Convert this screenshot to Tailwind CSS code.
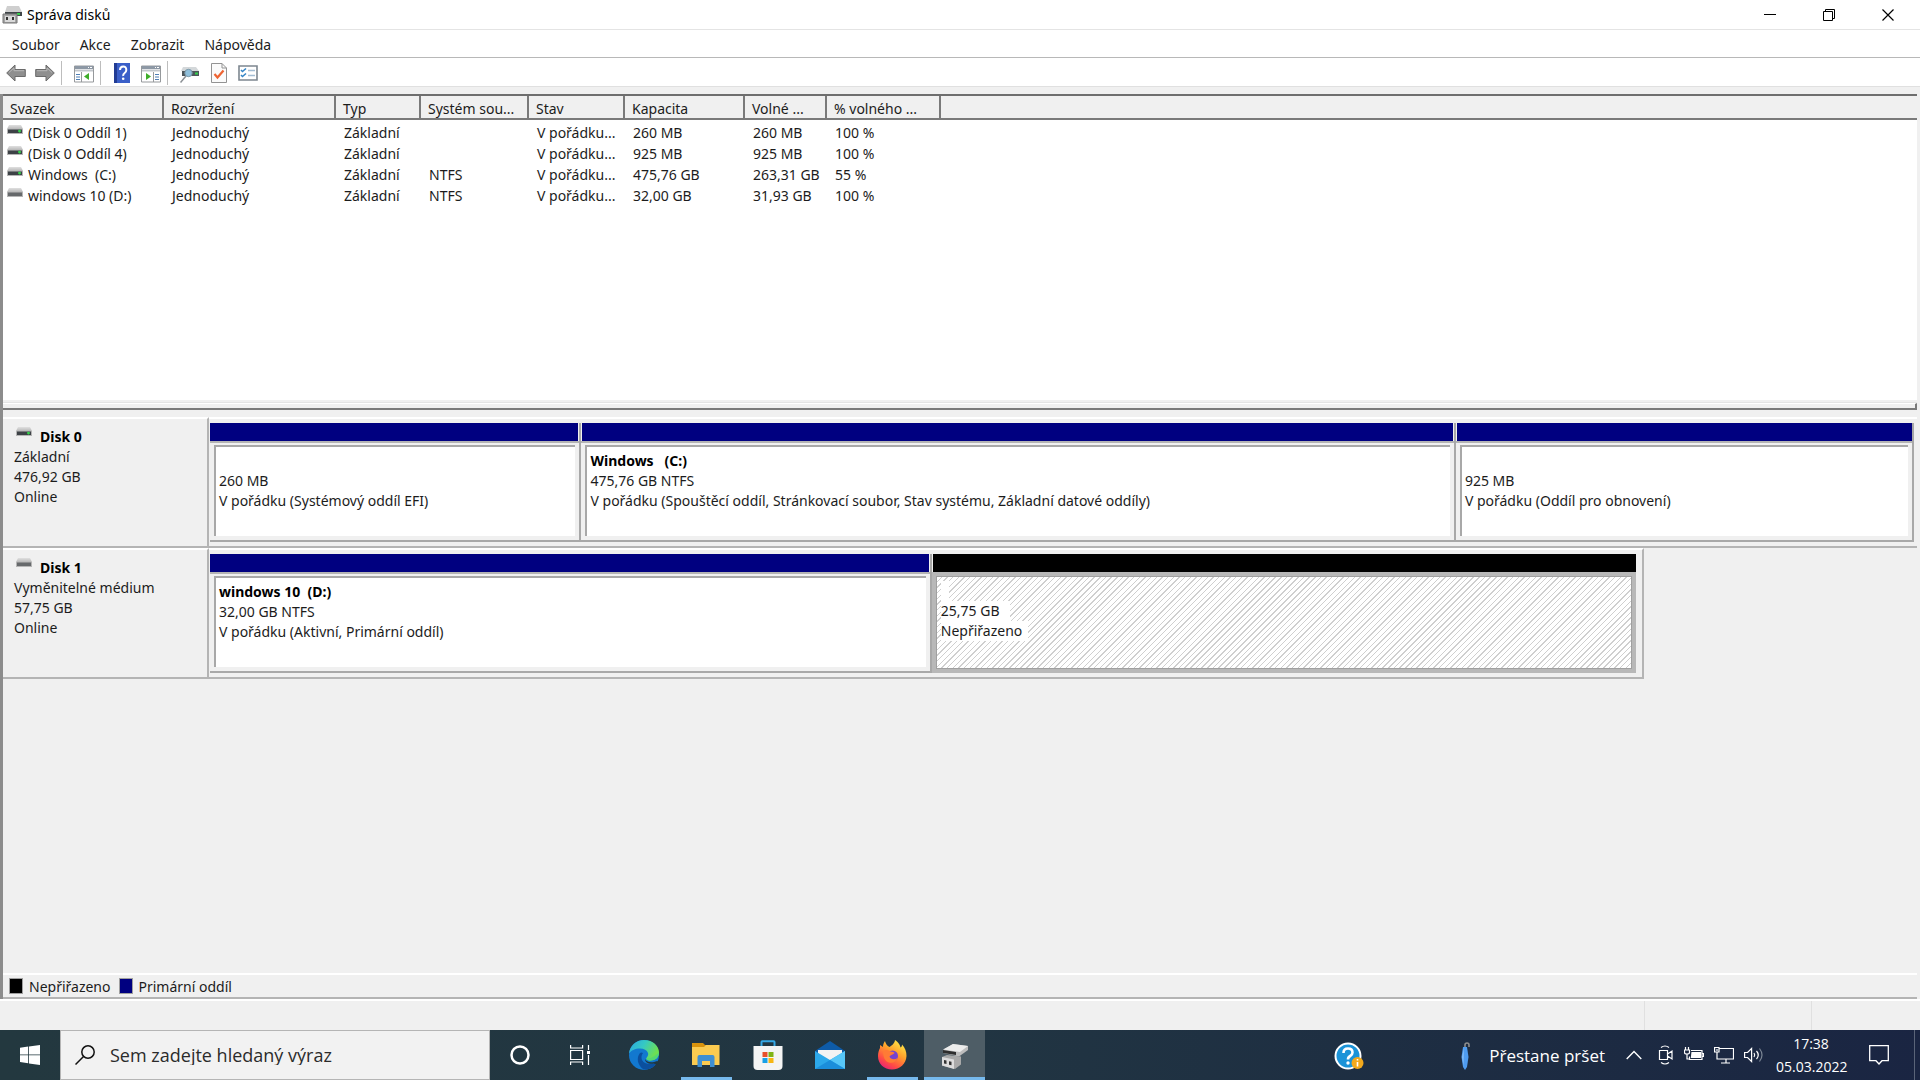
<!DOCTYPE html>
<html lang="cs">
  <head>
    <meta charset="UTF-8" />
    <meta name="viewport" content="width=device-width, initial-scale=1.0" />
    <title>Správa disků</title>
    <script src="https://cdn.jsdelivr.net/npm/@tailwindcss/browser@4"></script>
  </head>
  <body
    class="flex flex-col h-screen overflow-hidden bg-[#f0f0f0] font-['Noto_Sans','Open_Sans',sans-serif] text-[14px] leading-5 text-[#1c1c1c]"
  >
    <!-- Shared icons -->
    <svg class="absolute w-0 h-0">
      <linearGradient id="lid" x1="0" y1="0" x2="0" y2="1">
        <stop offset="0" stop-color="#e0e0e0" />
        <stop offset="1" stop-color="#b8b8b8" />
      </linearGradient>
      <symbol id="drive" viewBox="0 0 16 10">
        <path d="M2 0h12l2 4H0z" fill="url(#lid)" />
        <path d="M0 4h16v5H0z" fill="#b5b5b5" />
        <path d="M1 4.500h14v3.500H1z" fill="#3d4246" />
        <path d="M11 6h3M12.500 4.700v2.800" stroke="#35d04c" stroke-width="1.300" />
      </symbol>
      <symbol id="removable" viewBox="0 0 16 10">
        <path d="M2 0h12l2 4H0z" fill="url(#lid)" />
        <path d="M0 4h16v5H0z" fill="#b5b5b5" />
        <path d="M1 4.500h14v3.500H1z" fill="#66696b" />
      </symbol>
    </svg>

    <!-- Title bar -->
    <header class="flex items-center h-[30px] shrink-0 bg-white border-b border-[#e4e4e4] pl-0.5 pr-[3px]">
      <svg class="w-5 h-5" viewBox="0 0 20 20">
        <path d="M5 1h12l3 6H3z" fill="#cfcfcf" />
        <path d="M3 7h17v4H3z" fill="#3f4548" />
        <path d="M15 9h3" stroke="#35d04c" stroke-width="2" />
        <path d="M1 9h14v9H1z" fill="#a4a4a4" stroke="#777" />
        <path d="M3 11h10v6H3z" fill="#d9d9d9" />
        <path d="M4 12h2v3H4zM10 12h2v3h-2z" fill="#333" />
      </svg>
      <h1 class="ml-[5px] text-black">Správa disků</h1>
      <div class="ml-auto flex">
        <button class="w-[59px] h-7 flex items-center justify-center" aria-label="Minimalizovat">
          <svg class="w-3 h-3" viewBox="0 0 12 12"><path d="M0 5.500h12" stroke="#000" /></svg>
        </button>
        <button class="w-[59px] h-7 flex items-center justify-center" aria-label="Obnovit">
          <svg class="w-3 h-3" viewBox="0 0 12 12" fill="none" stroke="#000">
            <path d="M.5 2.500h9v9h-9zM2.500 2.500v-2h9v9h-2" />
          </svg>
        </button>
        <button class="w-[59px] h-7 flex items-center justify-center" aria-label="Zavřít">
          <svg class="w-3 h-3" viewBox="0 0 12 12"><path d="M.5.5l11 11M11.500.5l-11 11" stroke="#000" stroke-width="1.200" /></svg>
        </button>
      </div>
    </header>

    <!-- Menu -->
    <nav class="flex items-center h-7 shrink-0 bg-white border-b border-[#b8b8b8] pt-0.5 pl-3 gap-5">
      <button>Soubor</button>
      <button>Akce</button>
      <button>Zobrazit</button>
      <button>Nápověda</button>
    </nav>

    <!-- Toolbar -->
    <div class="flex items-center h-[29px] shrink-0 bg-white border-b border-[#e0e0e0] pl-1.5 pt-0.5">
      <button aria-label="Zpět">
        <svg class="w-5 h-[18px]" viewBox="0 0 20 18">
          <path d="M.7 9L9 1v4.500h10.300v7H9V17z" fill="#8f8f8f" stroke="#6b6b6b" stroke-linejoin="round" />
          <path d="M3 8.500L8 4v2.700h10" fill="none" stroke="#b8b8b8" />
        </svg>
      </button>
      <button class="ml-[9px]" aria-label="Vpřed">
        <svg class="w-5 h-[18px]" viewBox="0 0 20 18">
          <path d="M19.300 9L11 1v4.500H.7v7H11V17z" fill="#8f8f8f" stroke="#6b6b6b" stroke-linejoin="round" />
          <path d="M17 8.500L12 4v2.700H2" fill="none" stroke="#b8b8b8" />
        </svg>
      </button>
      <span class="w-px h-6 ml-1.5 bg-[#bdbdbd]"></span>
      <button class="ml-3 mt-0.5" aria-label="Zobrazit strom konzoly">
        <svg class="w-5 h-[18px]" viewBox="0 0 20 18">
          <path d="M.5 1h19v16H.5z" fill="#fff" stroke="#96999c" />
          <path d="M1 1h18v3H1z" fill="#8d98a5" />
          <path d="M1 5.500h18" stroke="#c2c7cc" stroke-width="2" />
          <path d="M7.500 7v10" stroke="#96999c" />
          <path d="M2 9.500h4M2 12h4M2 14.500h4" stroke="#4f7fb5" />
          <path d="M15 8v7l-5-3.500z" fill="#3fae2a" />
          <path d="M14 2.500h1M16 2.500h2" stroke="#fff" />
        </svg>
      </button>
      <span class="w-px h-6 ml-1.5 bg-[#bdbdbd]"></span>
      <button class="ml-[13px]" aria-label="Nápověda">
        <svg class="w-4 h-5" viewBox="0 0 16 20">
          <path d="M0 0h16v20H0z" fill="#3a5fc8" />
          <path d="M0 0h3v20H0z" fill="#223c94" />
          <path d="M6 7q0-3.500 3.200-3.500T12.300 7q0 1.800-1.700 3T9.200 13" fill="none" stroke="#fff" stroke-width="2" />
          <circle cx="9.200" cy="15.700" r="1.300" fill="#fff" />
        </svg>
      </button>
      <button class="ml-[11px] mt-0.5" aria-label="Zobrazit podokno akcí">
        <svg class="w-5 h-[18px]" viewBox="0 0 20 18">
          <path d="M.5 1h19v16H.5z" fill="#fff" stroke="#96999c" />
          <path d="M1 1h18v3H1z" fill="#8d98a5" />
          <path d="M1 5.500h18" stroke="#c2c7cc" stroke-width="2" />
          <path d="M12.500 7v10" stroke="#96999c" />
          <path d="M14 9.500h4M14 12h4M14 14.500h4" stroke="#4f7fb5" />
          <path d="M5 8v7l5-3.500z" fill="#3fae2a" />
          <path d="M14 2.500h1M16 2.500h2" stroke="#fff" />
        </svg>
      </button>
      <span class="w-px h-6 ml-1.5 bg-[#bdbdbd]"></span>
      <button class="ml-3 mt-1" aria-label="Znovu prohledat disky">
        <svg class="w-[19px] h-4" viewBox="0 0 19 16">
          <path d="M3 0h13l3 4H1z" fill="#d4d8da" />
          <path d="M2 4h17v5H2z" fill="#4d565b" />
          <path d="M15 6.500h3" stroke="#35d04c" stroke-width="2" />
          <path d="M6 9l-5.500 6.500" stroke="#8a8f94" stroke-width="1.500" />
          <circle cx="8.500" cy="6" r="3.700" fill="#8fc0dc" stroke="#7c98a8" />
        </svg>
      </button>
      <button class="ml-3" aria-label="Vlastnosti">
        <svg class="w-4 h-5" viewBox="0 0 16 20">
          <path d="M.5.5h10.500l4.500 4.500v14.500H.5z" fill="#fbfbfb" stroke="#939393" />
          <path d="M11 .5v4.500h4.500" fill="none" stroke="#939393" />
          <path d="M3.500 11l3 3.500 6-7" fill="none" stroke="#ee6433" stroke-width="2.200" />
        </svg>
      </button>
      <button class="ml-[11px]" aria-label="Možnosti zobrazení">
        <svg class="w-5 h-4" viewBox="0 0 20 16">
          <path d="M1 1h18v14H1z" fill="#fff" stroke="#7d8790" stroke-width="1.600" />
          <path d="M3 5l1.500 1.500L8 3.500M3 10l1.500 1.500L8 8.500" fill="none" stroke="#3585c6" stroke-width="1.600" />
          <path d="M10 5.500h7M10 10.500h7" stroke="#a3bdd3" stroke-width="1.400" />
        </svg>
      </button>
    </div>

    <main class="flex flex-col flex-1 min-h-0 mt-[7px] border-l-[3px] border-l-[#8c8c8c] mr-[3px]">
      <!-- Volume list -->
      <section class="flex flex-col flex-[317_1_0%] min-h-0 border-t-2 border-[#6e6e6e]">
        <div class="flex-1 bg-white">
          <table class="w-full table-fixed text-left whitespace-nowrap">
            <colgroup>
              <col class="w-40" />
              <col class="w-[172px]" />
              <col class="w-[85px]" />
              <col class="w-[108px]" />
              <col class="w-24" />
              <col class="w-[120px]" />
              <col class="w-[82px]" />
              <col class="w-[114px]" />
              <col />
            </colgroup>
            <thead>
              <tr class="h-[23px] bg-[#f0f0f0] leading-[18px] [&>th]:font-normal [&>th]:p-0 [&>th]:pl-[7px] [&>th]:pt-[3px] [&>th]:border-b-2 [&>th]:border-r-2 [&>th]:border-[#7a7a7a] [&>th:last-child]:border-r-0">
                <th>Svazek</th>
                <th>Rozvržení</th>
                <th>Typ</th>
                <th>Systém sou...</th>
                <th>Stav</th>
                <th>Kapacita</th>
                <th>Volné ...</th>
                <th>% volného ...</th>
                <th></th>
              </tr>
            </thead>
            <tbody class="leading-[17px] [&_td]:p-0 [&_td]:pl-[9px] [&_td]:pt-1 [&_tr]:h-[21px]">
              <tr>
                <td><svg class="inline w-4 h-2.5 -ml-[5px] mr-[5px] -mt-2"><use href="#drive" /></svg>(Disk 0 Oddíl 1)</td>
                <td>Jednoduchý</td>
                <td>Základní</td>
                <td></td>
                <td>V pořádku...</td>
                <td>260 MB</td>
                <td>260 MB</td>
                <td>100 %</td>
                <td></td>
              </tr>
              <tr>
                <td><svg class="inline w-4 h-2.5 -ml-[5px] mr-[5px] -mt-2"><use href="#drive" /></svg>(Disk 0 Oddíl 4)</td>
                <td>Jednoduchý</td>
                <td>Základní</td>
                <td></td>
                <td>V pořádku...</td>
                <td>925 MB</td>
                <td>925 MB</td>
                <td>100 %</td>
                <td></td>
              </tr>
              <tr>
                <td class="whitespace-pre"><svg class="inline w-4 h-2.5 -ml-[5px] mr-[5px] -mt-2"><use href="#drive" /></svg>Windows  (C:)</td>
                <td>Jednoduchý</td>
                <td>Základní</td>
                <td>NTFS</td>
                <td>V pořádku...</td>
                <td>475,76 GB</td>
                <td>263,31 GB</td>
                <td>55 %</td>
                <td></td>
              </tr>
              <tr>
                <td><svg class="inline w-4 h-2.5 -ml-[5px] mr-[5px] -mt-2"><use href="#removable" /></svg>windows 10 (D:)</td>
                <td>Jednoduchý</td>
                <td>Základní</td>
                <td>NTFS</td>
                <td>V pořádku...</td>
                <td>32,00 GB</td>
                <td>31,93 GB</td>
                <td>100 %</td>
                <td></td>
              </tr>
            </tbody>
          </table>
        </div>
        <div class="h-[3px] border-b border-[#e4e4e4]"></div>
        <div class="h-[7px] border-t border-t-white border-b-2 border-r-2 border-[#7a7a7a]"></div>
      </section>

      <!-- Disk map -->
      <section class="flex-[562_1_0%] min-h-0 pt-[7px]">
        <div class="flex h-[131px]">
          <div class="w-[206px] border-t-2 border-t-white border-r-2 border-b-2 border-[#b4b4b4] pl-[11px] pt-2">
            <h2 class="flex font-bold text-black"><svg class="w-4 h-2.5 ml-0.5 mr-2"><use href="#drive" /></svg>Disk 0</h2>
            <p>Základní</p>
            <p>476,92 GB</p>
            <p>Online</p>
          </div>
          <div class="flex flex-1 border-t-2 border-t-white border-b-2 border-[#b4b4b4] pt-1 pl-px pb-1 pr-[3px]">
            <div class="flex flex-col flex-[371_1_0%] min-w-0 border-r-2 border-b-2 border-[#a8a8a8]">
              <div class="h-[18px] bg-[#000080] border-r border-[#f0f0f0]"></div>
              <div class="flex-1 flex border-t-2 border-[#b4b4b4] p-0.5 pl-1 pb-1 pr-1">
                <div class="flex-1 bg-white border-t-2 border-l-2 border-[#a8a8a8] pl-[3px] pt-1 whitespace-nowrap">
                  <p class="h-5"></p>
                  <p>260 MB</p>
                  <p>V pořádku (Systémový oddíl EFI)</p>
                </div>
              </div>
            </div>
            <div class="flex flex-col flex-[876_1_0%] min-w-0 border-r-2 border-b-2 border-[#a8a8a8]">
              <div class="h-[18px] bg-[#000080] border-x border-[#f0f0f0]"></div>
              <div class="flex-1 flex border-t-2 border-[#b4b4b4] p-0.5 pl-1 pb-1 pr-1">
                <div class="flex-1 bg-white border-t-2 border-l-2 border-[#a8a8a8] pl-[3px] pt-1 whitespace-nowrap">
                  <p class="font-bold text-black whitespace-pre">Windows   (C:)</p>
                  <p>475,76 GB NTFS</p>
                  <p>V pořádku (Spouštěcí oddíl, Stránkovací soubor, Stav systému, Základní datové oddíly)</p>
                </div>
              </div>
            </div>
            <div class="flex flex-col flex-[458_1_0%] min-w-0 border-r-2 border-b-2 border-[#a8a8a8]">
              <div class="h-[18px] bg-[#000080] border-l border-[#f0f0f0]"></div>
              <div class="flex-1 flex border-t-2 border-[#b4b4b4] p-0.5 pl-1 pb-1 pr-1">
                <div class="flex-1 bg-white border-t-2 border-l-2 border-[#a8a8a8] pl-[3px] pt-1 whitespace-nowrap">
                  <p class="h-5"></p>
                  <p>925 MB</p>
                  <p>V pořádku (Oddíl pro obnovení)</p>
                </div>
              </div>
            </div>
          </div>
        </div>

        <div class="flex h-[131px]">
          <div class="w-[206px] border-t-2 border-t-white border-r-2 border-b-2 border-[#b4b4b4] pl-[11px] pt-2">
            <h2 class="flex font-bold text-black"><svg class="w-4 h-2.5 ml-0.5 mr-2"><use href="#removable" /></svg>Disk 1</h2>
            <p>Vyměnitelné médium</p>
            <p>57,75 GB</p>
            <p>Online</p>
          </div>
          <div class="flex-1">
            <div class="flex h-full w-[84%] border-t-2 border-t-white border-r-2 border-b-2 border-[#b4b4b4] pt-1 pl-px pb-1 pr-1.5">
              <div class="flex flex-col flex-[722_1_0%] min-w-0 border-r-2 border-b-2 border-[#a8a8a8]">
                <div class="h-[18px] bg-[#000080] border-r border-[#f0f0f0]"></div>
                <div class="flex-1 flex border-t-2 border-[#b4b4b4] p-0.5 pl-1 pb-1 pr-1">
                  <div class="flex-1 bg-white border-t-2 border-l-2 border-[#a8a8a8] pl-[3px] pt-1 whitespace-nowrap">
                    <p class="font-bold text-black whitespace-pre">windows 10  (D:)</p>
                    <p>32,00 GB NTFS</p>
                    <p>V pořádku (Aktivní, Primární oddíl)</p>
                  </div>
                </div>
              </div>
              <div class="flex flex-col flex-[706_1_0%] min-w-0">
                <div class="h-[18px] bg-black border-l border-[#f0f0f0]"></div>
                <div class="flex-1 border-4 border-[#b8b8b8]">
                  <div class="h-full border border-[#a0a0a0] bg-[repeating-linear-gradient(135deg,#fff_0px,#fff_3px,#cfcfcf_3px,#cfcfcf_4px)] pl-1 pt-1">
                    <p class="w-2 h-5 bg-white"></p>
                    <p class="w-fit bg-white pr-2.5">25,75 GB</p>
                    <p class="w-fit bg-white pr-1.5">Nepřiřazeno</p>
                  </div>
                </div>
              </div>
            </div>
          </div>
        </div>
      </section>

      <!-- Legend -->
      <div class="flex items-center h-[26px] shrink-0 border-t-2 border-t-white border-b-2 border-[#b4b4b4] pl-1.5">
        <span class="w-3.5 h-4 bg-black border border-[#a0a0a0]"></span>
        <span class="ml-1.5 pt-0.5">Nepřiřazeno</span>
        <span class="w-3.5 h-4 ml-2 bg-[#000080] border border-[#a0a0a0]"></span>
        <span class="ml-1.5 pt-0.5">Primární oddíl</span>
      </div>
    </main>

    <!-- Status bar -->
    <div class="flex h-[31px] shrink-0 border-t-2 border-white">
      <span class="flex-1"></span>
      <span class="w-[167px] border-l border-[#e0e0e0]"></span>
      <span class="w-[109px] border-l border-[#e0e0e0]"></span>
    </div>

    <!-- Taskbar -->
    <footer class="flex h-[50px] shrink-0 bg-linear-to-r from-[#23383f] via-[#213542] to-[#1a2542] text-white">
      <button class="w-[60px] flex items-center justify-center" aria-label="Start">
        <svg class="w-5 h-5" viewBox="0 0 20 20" fill="#fff">
          <path d="M0 2.800l8.200-1.200v7.900H0zM9 1.500L20 0v9.500H9zM0 10.300h8.200v7.900L0 17zM9 10.300h11V20L9 18.400z" />
        </svg>
      </button>
      <label class="flex items-center w-[430px] bg-[#f2f2f2] border border-[#b5b5b5] pl-3.5 text-[#2b2b2b]">
        <svg class="w-5 h-5" viewBox="0 0 20 20" fill="none" stroke="#111" stroke-width="1.500">
          <circle cx="13" cy="7" r="6.200" />
          <path d="M8.500 11.500L.5 19.500" />
        </svg>
        <input
          type="text"
          aria-label="Hledat"
          placeholder="Sem zadejte hledaný výraz"
          class="flex-1 ml-[15px] font-['Open_Sans',sans-serif] text-[18px] outline-none placeholder:text-[#2b2b2b]"
        />
      </label>
      <button class="w-[60px] flex items-center justify-center" aria-label="Cortana">
        <svg class="w-5 h-5" viewBox="0 0 20 20"><circle cx="10" cy="10" r="8.500" fill="none" stroke="#fff" stroke-width="2.500" /></svg>
      </button>
      <button class="w-[60px] flex items-center justify-center" aria-label="Zobrazení úkolů">
        <svg class="w-5 h-5" viewBox="0 0 20 20" fill="none" stroke="#fff" stroke-width="1.200">
          <path d="M.6 0v3h12V0M.6 5.500h12v9H.6zM.6 20v-3h12v3M18.500 0v5M18.500 10v10" />
          <path d="M17 6h3v3h-3z" fill="#fff" stroke="none" />
        </svg>
      </button>
      <div class="flex gap-0.5 ml-1">
        <button class="w-[60px] flex items-center justify-center" aria-label="Microsoft Edge">
          <svg class="w-[30px] h-[30px]" viewBox="0 0 30 30">
            <defs>
              <linearGradient id="edgeTop" x1="0" y1="0" x2="1" y2=".4">
                <stop offset="0" stop-color="#2aa5e0" />
                <stop offset=".5" stop-color="#35c8c4" />
                <stop offset="1" stop-color="#6fe04e" />
              </linearGradient>
            </defs>
            <circle cx="15" cy="15" r="15" fill="#1278cf" />
            <path d="M0 13.500C1 5.500 7 0 15 0c9 0 15 6 15 12.500 0 5-4 8-8.500 8-3.500 0-4.500-1.500-4-2.500 1.500-2 2-3.500 1.500-5C18 10 15 8.500 11 8.500 6 8.500 2 10.500 0 13.500z" fill="url(#edgeTop)" />
            <path d="M11 13c-4 5-2.500 12 3.500 16.500 6 .5 11-2.500 13.500-7.500-5 3-13 2.500-15-2-1-2.500-.5-5 1-7-1-.8-2-.8-3 0z" fill="#0b4f9e" />
            <path d="M30 12.500c0 5-4 8-8.500 8-3.500 0-4.500-1.500-4-2.500 4 1 7-1 12.500-5.500z" fill="#52d672" />
            <path d="M16 19c1 3 6 4.500 12.200 2l1.800 1.500-2 2.500-3-1.500c-5 1-9-1-9-4.500z" fill="#21363f" />
          </svg>
        </button>
        <button class="w-[60px] flex flex-col items-center" aria-label="Průzkumník souborů">
          <svg class="w-7 h-6 mt-[13px] mb-auto" viewBox="0 0 28 24">
            <path d="M0 0h11l2 2h14v6H0z" fill="#d9930d" />
            <path d="M0 4h12l2-2h13.500v20H0z" fill="#fbcb50" />
            <path d="M5.500 24V14q0-2 2-2h13q2 0 2 2v10h-4.500v-6H10v6z" fill="#3f8fd2" />
          </svg>
          <span class="w-[51px] h-[3px] bg-[#76b9ed]"></span>
        </button>
        <button class="w-[60px] flex items-center justify-center" aria-label="Microsoft Store">
          <svg class="w-[30px] h-[30px]" viewBox="0 0 30 30">
            <path d="M8.500 7V2q0-.8.800-.8h11.400q.8 0 .8.800v5" fill="none" stroke="#35a8e6" stroke-width="2" />
            <path d="M.5 6h29v20q0 4-4 4h-21q-4 0-4-4z" fill="#f4f4f4" />
            <path d="M9.500 12h5v5h-5z" fill="#e8502b" />
            <path d="M15.500 12h5v5h-5z" fill="#7fb416" />
            <path d="M9.500 18h5v5h-5z" fill="#18a0e6" />
            <path d="M15.500 18h5v5h-5z" fill="#f7b613" />
          </svg>
        </button>
        <button class="w-[60px] flex items-center justify-center" aria-label="Pošta">
          <svg class="w-[30px] h-7" viewBox="0 0 30 28">
            <path d="M15 0l15 10v2H0v-2z" fill="#0e5ba8" />
            <path d="M3 9h24v12H3z" fill="#f3f3f3" />
            <path d="M0 10l15 9L30 10v18H0z" fill="#2ca8ea" />
            <path d="M15 19L30 10v18z" fill="#57c7f8" />
            <path d="M0 28l15-9 15 9z" fill="#1b8edb" />
          </svg>
        </button>
        <button class="w-[60px] flex flex-col items-center" aria-label="Firefox">
          <svg class="w-[30px] h-[30px] mt-2.5 mb-auto" viewBox="0 0 30 30">
            <defs>
              <linearGradient id="fox" x1=".8" y1="0" x2=".2" y2="1">
                <stop offset="0" stop-color="#fff04a" />
                <stop offset=".4" stop-color="#ffa02b" />
                <stop offset=".75" stop-color="#ff4a46" />
                <stop offset="1" stop-color="#e21d7d" />
              </linearGradient>
            </defs>
            <path d="M18 0c4 3 5 5 5.500 7.500 1-.5 1.500-1.500 1.500-3 3 3 4.500 7 4.500 11.500C29 24 23 29.500 15 29.500S1 24 1 16c0-3 .8-6 2-8v-3l3 2c0-2 .5-4 2-6 .5 2.500 2 5 4.500 6 2-1.500 5-3 5.500-7z" fill="url(#fox)" />
            <circle cx="15.500" cy="16" r="5.500" fill="#7643d0" />
            <path d="M6 11c3-2 6-1 7.500.5 2 .5 4 .5 4 1.500-1 2-4 1.500-5 3.500 1 3 5 3.500 8 1.500-1 4-5 5.500-8.500 4.500C8 21.500 6 17 6 11z" fill="#ff7b35" />
          </svg>
          <span class="w-[51px] h-[3px] bg-[#76b9ed]"></span>
        </button>
        <button class="w-[61px] flex flex-col items-center bg-[#4e5d66]" aria-label="Správa disků">
          <svg class="w-7 h-[26px] mt-[13px] mb-auto" viewBox="0 0 28 26">
            <path d="M2 7L12 1l15 2v4l-9 6.500L2 10z" fill="#bdbdbd" />
            <path d="M12 1l15 2-8 6L2 6.500z" fill="#ececec" />
            <path d="M2 7l13 2v3L2 10z" fill="#2e2e2e" />
            <path d="M1 14l5-2 14 1.500v8l-6 4.500-13-3.500z" fill="#a9a9a9" />
            <path d="M1 14l12 2.500V26L1 22.500z" fill="#dcdcdc" />
            <path d="M3 17l2.500.5v3.500L3 20.500zM8 18.200l2.500.5v3.500L8 21.700z" fill="#333" />
          </svg>
          <span class="w-full h-[3px] bg-[#76b9ed]"></span>
        </button>
      </div>

      <div class="ml-auto flex items-center font-['Open_Sans',sans-serif]">
        <button class="pt-0.5" aria-label="Získat nápovědu">
          <svg class="w-[30px] h-[30px]" viewBox="0 0 30 30">
            <circle cx="14" cy="15" r="12.500" fill="#1b93d8" stroke="#fff" stroke-width="2" />
            <path d="M9.500 12q0-4.500 4.500-4.500t4.500 4q0 2.200-2.300 3.500T14 18.500" fill="none" stroke="#fff" stroke-width="2.600" />
            <circle cx="14" cy="22" r="1.700" fill="#fff" />
            <circle cx="23.500" cy="22" r="6" fill="#f2a91d" />
            <path d="M23.500 21v4.500M23.500 18v1.600" stroke="#fff" stroke-width="1.600" />
          </svg>
        </button>
        <button class="flex items-center ml-[95px] pt-0.5 text-[17px]">
          <svg class="w-3 h-7" viewBox="0 0 12 28">
            <path d="M6 7V3q0-2 2-2t2 2v2" fill="none" stroke="#8d8d8d" stroke-width="1.600" />
            <path d="M4 5h4l1.500 10-1.500 10L6 28l-2-3-1.500-10z" fill="#4f9cf0" />
            <path d="M5 6l-2 9 1.500 9z" fill="#83bdf8" />
          </svg>
          <span class="ml-[18px]">Přestane pršet</span>
        </button>
        <button class="ml-[21px]" aria-label="Zobrazit skryté ikony">
          <svg class="w-4 h-5" viewBox="0 0 16 20"><path d="M.7 14L8 6.500l7.300 7.500" fill="none" stroke="#fff" stroke-width="1.400" /></svg>
        </button>
        <button class="ml-4" aria-label="Sejmout schůzku">
          <svg class="w-4 h-5" viewBox="0 0 16 20" fill="none" stroke="#fff" stroke-width="1.200">
            <path d="M1.500 5.500h8v9h-8zM9.500 9l4.500-3v8l-4.500-3M3 2.500q4-3 8 0M3 17.500q4 3 8 0" />
          </svg>
        </button>
        <button class="ml-2.5" aria-label="Baterie">
          <svg class="w-5 h-5" viewBox="0 0 20 20" fill="none" stroke="#fff" stroke-width="1.200">
            <path d="M7 5.500h11v9H5.500v-3M18.500 8.500h1v3h-1" />
            <path d="M8 7.500h8.500v5H7.500z" fill="#fff" />
            <path d="M1.500 2v3M4.500 2v3M.5 5h5v2.500q0 1.500-2.500 1.500T.5 7.500zM3 9v5h2.500" />
          </svg>
        </button>
        <button class="ml-2.5" aria-label="Síť">
          <svg class="w-5 h-5" viewBox="0 0 20 20" fill="none" stroke="#fff" stroke-width="1.200">
            <path d="M5.500 3.500h14v10.500H3V9M12 14v4M7 18h9M.6 2.500h4.400v4.500H.6zM3 7v3M3 4v2" />
          </svg>
        </button>
        <button class="ml-2.5" aria-label="Hlasitost">
          <svg class="w-5 h-5" viewBox="0 0 20 20" fill="none" stroke="#fff" stroke-width="1.200">
            <path d="M.6 7.500h3l4-4v13l-4-4h-3zM10 8q1.500 2 0 4M12.500 6q3.500 4 0 8" />
            <path d="M15.500 3.500q5 6.500 0 13" stroke="#7c8795" />
          </svg>
        </button>
        <button class="ml-3 w-[70px] text-[14px] leading-[23px] text-center">
          <span class="block">17:38</span>
          <span class="block">05.03.2022</span>
        </button>
        <button class="ml-[23px] mr-[25px]" aria-label="Oznámení">
          <svg class="w-5 h-5" viewBox="0 0 20 20"><path d="M.7.700h18.600v15H13L10 19l-3-3.300H.7z" fill="none" stroke="#fff" stroke-width="1.300" /></svg>
        </button>
        <span class="w-1.5 h-[50px] border-l border-[#5a6478]"></span>
      </div>
    </footer>
  </body>
</html>
